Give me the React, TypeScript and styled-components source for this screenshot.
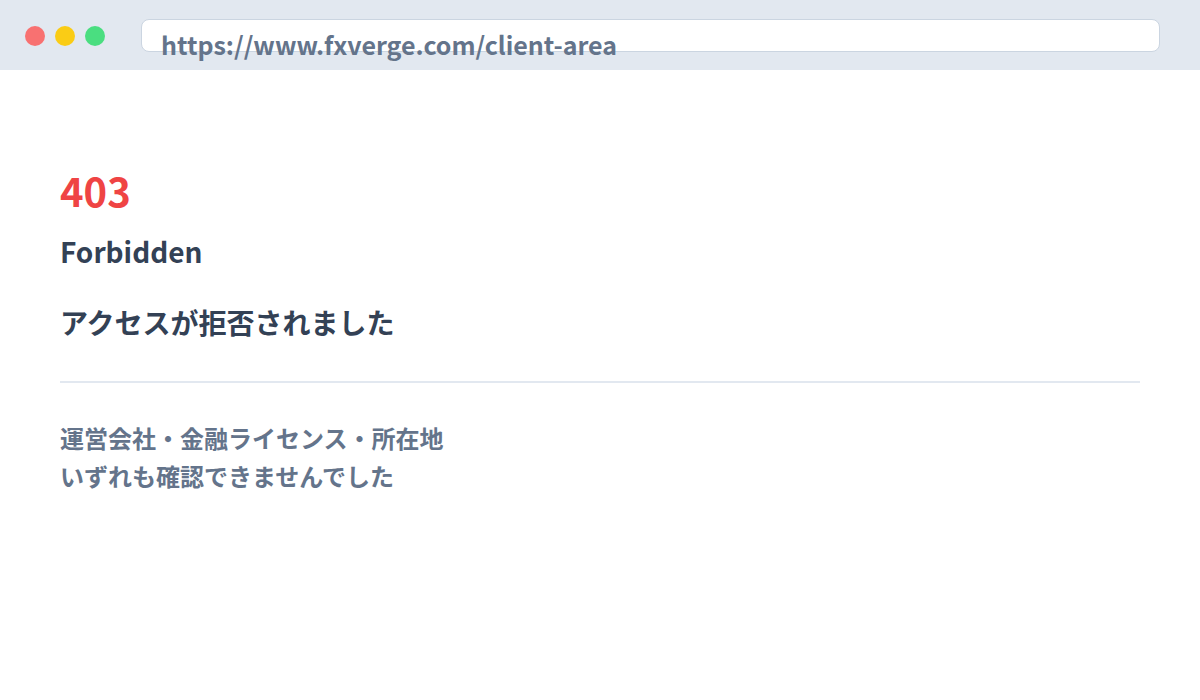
import React from 'react';
import styled, { createGlobalStyle } from 'styled-components';

const GlobalStyle = createGlobalStyle`
  html, body {
    margin: 0;
    padding: 0;
    background: #fff;
  }
  body {
    font-family: "Noto Sans CJK JP", "Noto Sans", sans-serif;
  }
`;

const App = () => {
  return (
    <Root>
      <GlobalStyle />
      <Toolbar>
        <Dots>
          <Dot color="#f87171" />
          <Dot color="#facc15" />
          <Dot color="#4ade80" />
        </Dots>
        <AddressBar>
          <Url>https://www.fxverge.com/client-area</Url>
        </AddressBar>
      </Toolbar>
      <Content>
        <Code>403</Code>
        <Title>Forbidden</Title>
        <Message>アクセスが拒否されました</Message>
        <Divider />
        <Note>
          運営会社・金融ライセンス・所在地
          <br />
          いずれも確認できませんでした
        </Note>
      </Content>
    </Root>
  );
};

export default App;

const Root = styled.div`
  width: 1200px;
  height: 700px;
  background: #fff;
  overflow: hidden;
`;
const Toolbar = styled.div`
  height: 70px;
  box-sizing: border-box;
  background: #e2e8f0;
  display: flex;
  align-items: flex-start;
  padding: 19px 40px 0 25px;
`;
const Dots = styled.div`
  display: flex;
  gap: 10px;
  margin-top: 7px;
`;
const Dot = styled.div<{ color: string }>`
  width: 20px;
  height: 20px;
  border-radius: 50%;
  background: ${(p) => p.color};
`;
const AddressBar = styled.div`
  flex: 1;
  height: 33px;
  box-sizing: border-box;
  margin-left: 36px;
  background: #fff;
  border: 1.5px solid #cbd5e1;
  border-radius: 8px;
  padding-left: 19px;
`;
const Url = styled.div`
  font-size: 25px;
  font-weight: 700;
  line-height: 25px;
  padding-top: 12px;
  color: #64748b;
  white-space: nowrap;
`;
const Content = styled.div`
  padding: 92px 60px 0;
`;
const Code = styled.div`
  font-size: 40px;
  font-weight: 700;
  line-height: 56px;
  color: #ef4444;
`;
const Title = styled.div`
  margin-top: 13px;
  font-size: 28px;
  font-weight: 700;
  line-height: 40px;
  color: #334155;
`;
const Message = styled.div`
  margin-top: 31px;
  font-size: 28px;
  font-weight: 700;
  line-height: 40px;
  color: #334155;
`;
const Divider = styled.div`
  margin-top: 39px;
  height: 2px;
  background: #e2e8f0;
`;
const Note = styled.div`
  margin-top: 36px;
  font-size: 24px;
  font-weight: 700;
  line-height: 38px;
  color: #64748b;
`;
